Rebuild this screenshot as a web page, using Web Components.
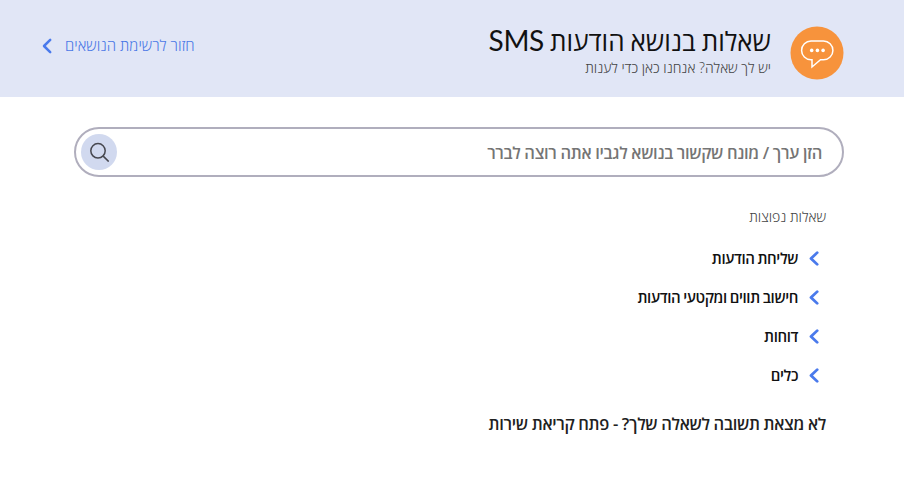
<!DOCTYPE html>
<html lang="he" dir="rtl">
<head>
<meta charset="utf-8">
<title>שאלות בנושא הודעות SMS</title>
<style>
  body {
    margin: 0;
    background: #fff;
    color: #212121;
    font-family: "Open Sans", "Liberation Sans", sans-serif;
  }
  bdi {
    font-family: Lato, sans-serif;
    font-size: 28px;
    letter-spacing: -0.300px;
  }
</style>
</head>
<body>

<faq-header>
  <topic-icon slot="icon"></topic-icon>
  <span slot="title">שאלות בנושא הודעות <bdi>SMS</bdi></span>
  <span slot="subtitle">יש לך שאלה? אנחנו כאן כדי לענות</span>
  <back-link slot="back">חזור לרשימת הנושאים</back-link>
</faq-header>

<search-box placeholder="הזן ערך / מונח שקשור בנושא לגביו אתה רוצה לברר"></search-box>

<faq-list>
  <span slot="label">שאלות נפוצות</span>
  <faq-item>שליחת הודעות</faq-item>
  <faq-item>חישוב תווים ומקטעי הודעות</faq-item>
  <faq-item>דוחות</faq-item>
  <faq-item>כלים</faq-item>
  <span slot="footer">לא מצאת תשובה לשאלה שלך? - פתח קריאת שירות</span>
</faq-list>

<script>
class TopicIcon extends HTMLElement {
  constructor() {
    super();
    this.attachShadow({ mode: "open" }).innerHTML = /* html */`
      <style>
        :host { display: block; width: 54px; height: 54px; }
        svg { display: block; }
      </style>
      <svg width="54" height="54" viewBox="0 0 54 54">
        <circle cx="27" cy="27" r="26.5" fill="#f7933c"/>
        <path d="M21 15H33.500A9.400 9.400 0 0 1 33.500 33.800H30.500L22 41V33.800H21A9.400 9.400 0 0 1 21 15Z"
          fill="none" stroke="#fff" stroke-width="1.5"/>
        <g fill="#fff">
          <circle cx="21.700" cy="24.400" r="1.800"/>
          <circle cx="27.400" cy="24.400" r="1.800"/>
          <circle cx="33.100" cy="24.400" r="1.800"/>
        </g>
      </svg>
    `;
  }
}
customElements.define("topic-icon", TopicIcon);

class ChevronIcon extends HTMLElement {
  constructor() {
    super();
    this.attachShadow({ mode: "open" }).innerHTML = /* html */`
      <style>
        :host { display: block; flex-shrink: 0; width: 10px; height: 16px; }
        svg { display: block; width: 100%; height: 100%; }
        path { stroke-width: var(--chevron-stroke, 2.5); }
      </style>
      <svg viewBox="0 0 10 16" preserveAspectRatio="none">
        <path d="M8.200 1.800 2 8l6.200 6.200" fill="none" stroke="#4a7aec"
          stroke-linecap="round" stroke-linejoin="round"/>
      </svg>
    `;
  }
}
customElements.define("chevron-icon", ChevronIcon);

class BackLink extends HTMLElement {
  constructor() {
    super();
    this.attachShadow({ mode: "open" }).innerHTML = /* html */`
      <style>
        :host {
          display: flex;
          align-items: center;
          gap: 13px;
          color: #4a78e6;
          font-size: 15px;
          font-weight: 300;
          line-height: 20px;
          white-space: nowrap;
          cursor: pointer;
        }
        span {
          padding-bottom: 2px;
          letter-spacing: 0.050px;
        }
      </style>
      <span><slot></slot></span>
      <chevron-icon></chevron-icon>
    `;
  }
}
customElements.define("back-link", BackLink);

class FaqHeader extends HTMLElement {
  constructor() {
    super();
    this.attachShadow({ mode: "open" }).innerHTML = /* html */`
      <style>
        :host {
          display: flex;
          align-items: flex-start;
          box-sizing: border-box;
          height: 97px;
          padding: 26px 60px 0 42px;
          background: #e1e6f6;
        }
        .text {
          display: flex;
          flex-direction: column;
          flex: 1;
          padding-right: 19px;
          white-space: nowrap;
        }
        h1 {
          height: 31px;
          margin: 0;
          font-size: 26px;
          font-weight: 400;
          line-height: 28px;
          word-spacing: -0.700px;
          color: #111;
        }
        p {
          margin: 0;
          font-size: 14px;
          font-weight: 300;
          line-height: 21px;
          color: #444;
        }
        .back { padding-top: 9px; }
      </style>
      <slot name="icon"></slot>
      <div class="text">
        <h1><slot name="title"></slot></h1>
        <p><slot name="subtitle"></slot></p>
      </div>
      <div class="back"><slot name="back"></slot></div>
    `;
  }
}
customElements.define("faq-header", FaqHeader);

class SearchBox extends HTMLElement {
  connectedCallback() {
    this.attachShadow({ mode: "open" }).innerHTML = /* html */`
      <style>
        :host {
          display: flex;
          align-items: center;
          box-sizing: border-box;
          height: 50px;
          margin: 30px 60px 0 74px;
          padding: 0 20px 0 5px;
          border: 2px solid #b0aebd;
          border-radius: 25px;
        }
        input {
          flex: 1;
          min-width: 0;
          padding: 2px 0 0;
          border: 0;
          outline: 0;
          background: none;
          font: 600 16.500px/24px "Open Sans", sans-serif;
          letter-spacing: -0.330px;
        }
        input::placeholder { color: #757575; opacity: 1; }
        button {
          display: grid;
          place-items: center;
          width: 36px;
          height: 36px;
          padding: 0;
          border: 0;
          border-radius: 50%;
          background: #d1d9ef;
        }
      </style>
      <input type="text" placeholder="${this.getAttribute("placeholder")}">
      <button type="button">
        <svg width="20" height="20" viewBox="0 0 20 20" fill="none" stroke="#46474f" stroke-width="1.500">
          <circle cx="9" cy="8.800" r="7.200"/>
          <path d="M14.200 14.100 19.700 19.600"/>
        </svg>
      </button>
    `;
  }
}
customElements.define("search-box", SearchBox);

class FaqItem extends HTMLElement {
  constructor() {
    super();
    this.attachShadow({ mode: "open" }).innerHTML = /* html */`
      <style>
        :host {
          --chevron-stroke: 2.8;
          display: flex;
          align-items: center;
          gap: 11px;
          height: 39px;
          padding-right: 7px;
          font-size: 15px;
          font-weight: 600;
          line-height: 20px;
          letter-spacing: -0.400px;
          word-spacing: -0.500px;
          color: #111;
        }
        chevron-icon { height: 15px; padding-top: 1px; }
      </style>
      <chevron-icon></chevron-icon>
      <span><slot></slot></span>
    `;
  }
}
customElements.define("faq-item", FaqItem);

class FaqList extends HTMLElement {
  constructor() {
    super();
    this.attachShadow({ mode: "open" }).innerHTML = /* html */`
      <style>
        :host {
          display: block;
          padding: 30px 78px 0;
        }
        .label {
          margin-bottom: 11px;
          font-size: 14px;
          font-weight: 300;
          line-height: 20px;
          color: #444;
        }
        .footer {
          margin-top: 18px;
          font-size: 16.500px;
          font-weight: 600;
          line-height: 24px;
          letter-spacing: -0.330px;
        }
      </style>
      <div class="label"><slot name="label"></slot></div>
      <slot></slot>
      <div class="footer"><slot name="footer"></slot></div>
    `;
  }
}
customElements.define("faq-list", FaqList);
</script>
</body>
</html>
